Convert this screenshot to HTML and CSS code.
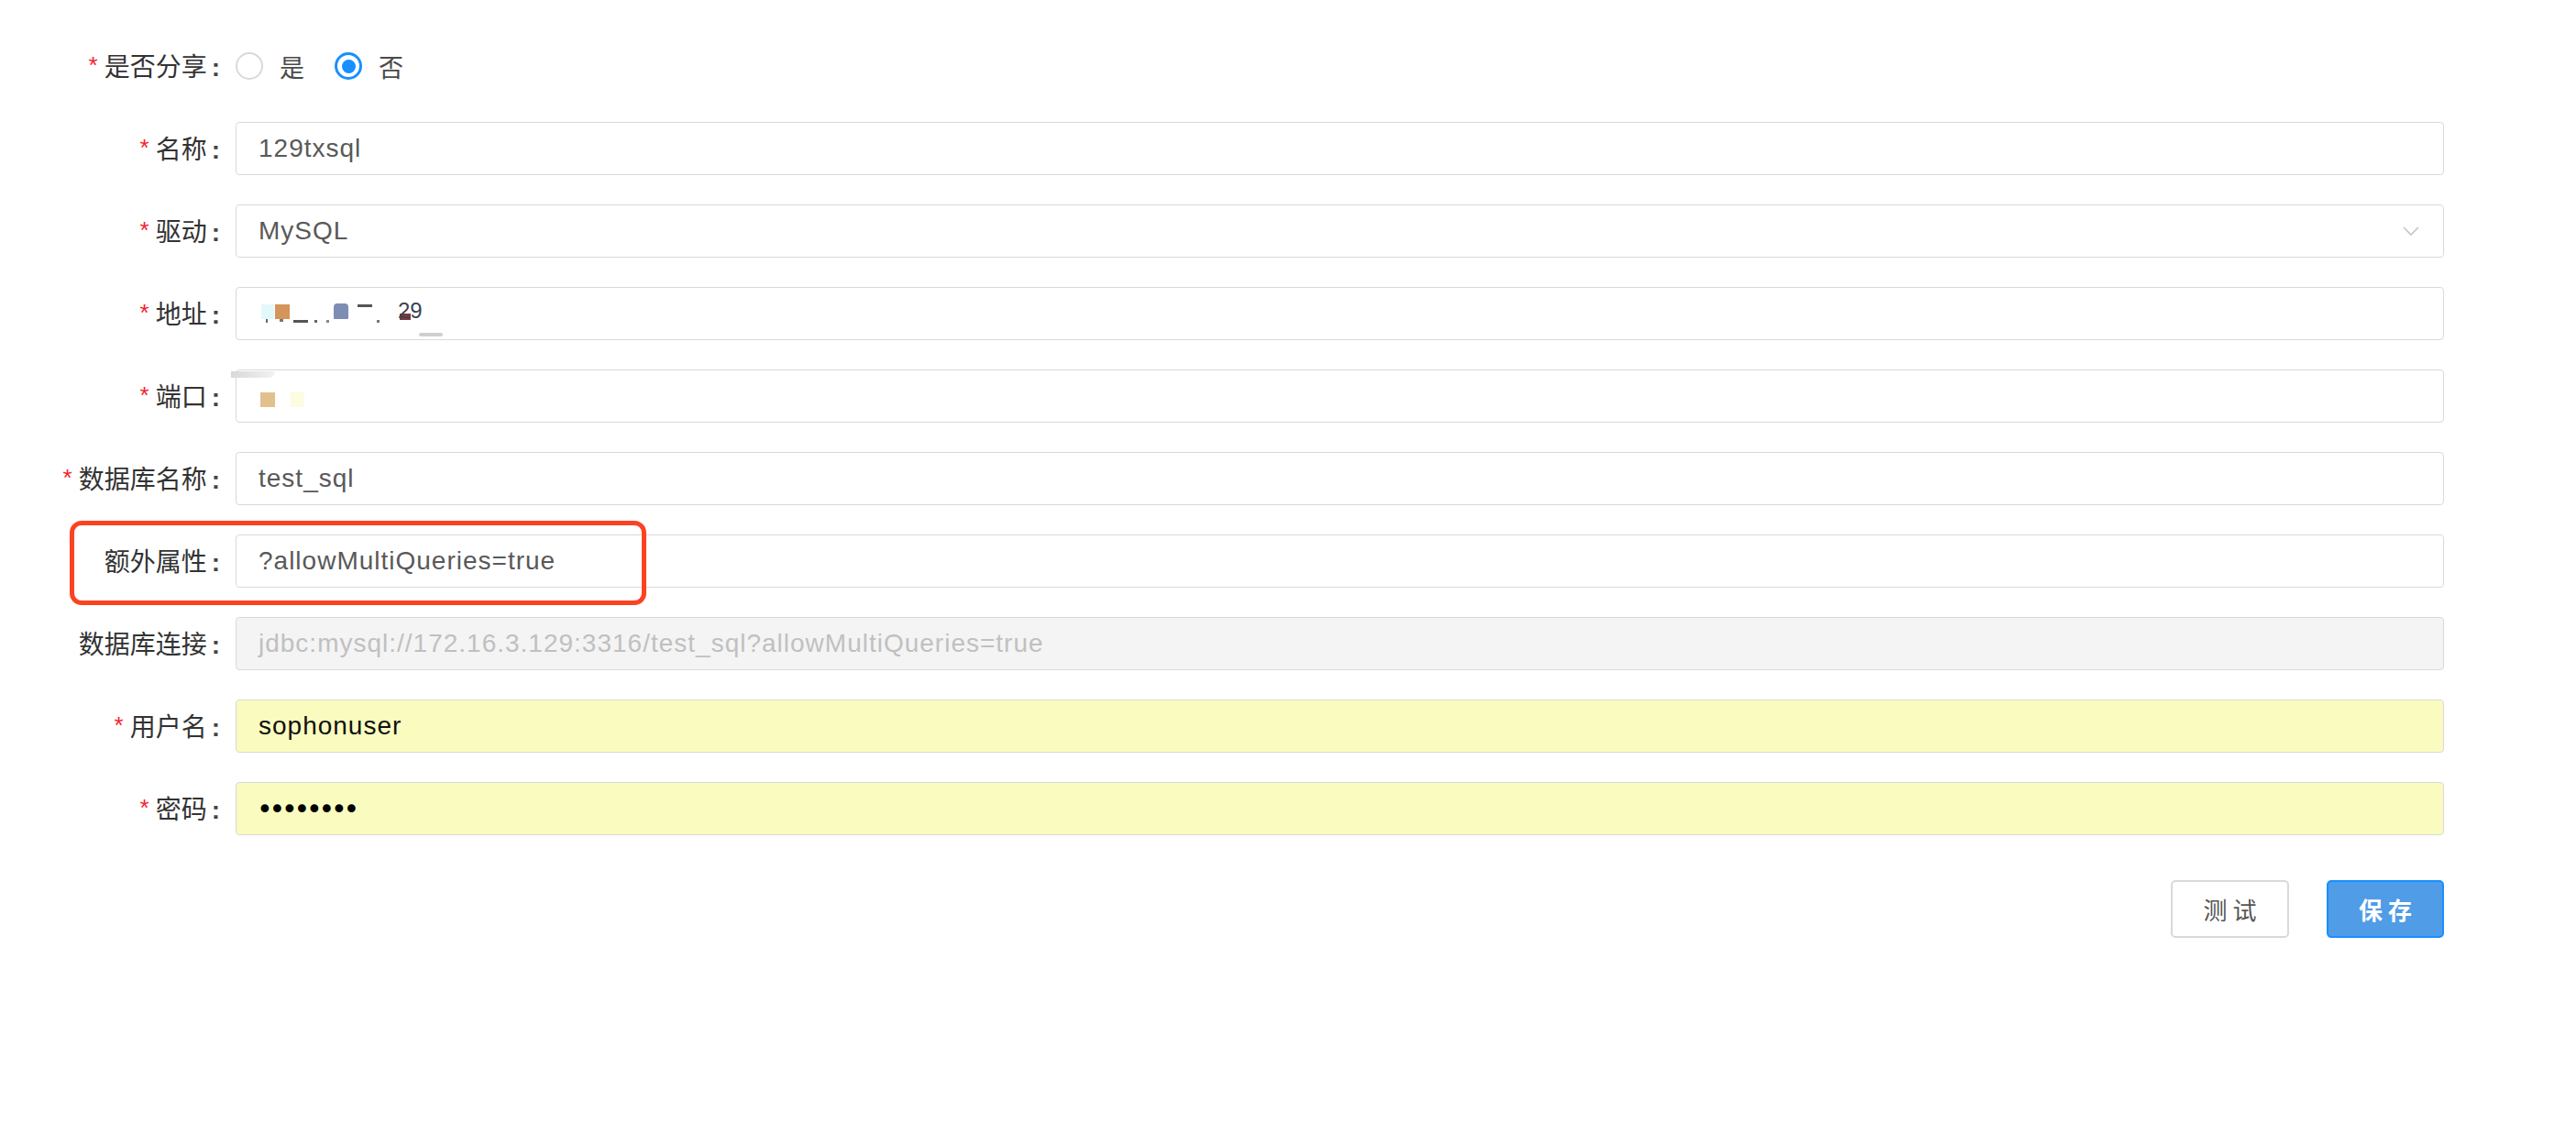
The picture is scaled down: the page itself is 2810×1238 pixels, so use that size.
FILE: index.html
```html
<!DOCTYPE html>
<html lang="zh-CN">
<head>
<meta charset="utf-8">
<title>数据源</title>
<link rel="stylesheet" href="styles.css">
</head>
<body>
<form class="form">
  <div class="row">
    <div class="label"><span class="req">*</span>是否分享<span class="colon">:</span></div>
    <div class="radios">
      <span class="radio-item"><span class="radio"></span><span class="radio-text">是</span></span>
      <span class="radio-item"><span class="radio checked"><span class="dot"></span></span><span class="radio-text">否</span></span>
    </div>
  </div>
  <div class="row">
    <div class="label"><span class="req">*</span>名称<span class="colon">:</span></div>
    <div class="field">129txsql</div>
  </div>
  <div class="row">
    <div class="label"><span class="req">*</span>驱动<span class="colon">:</span></div>
    <div class="field select">MySQL
      <svg class="chev" width="18" height="10" viewBox="0 0 18 10"><path d="M1 1 L9 9 L17 1" fill="none" stroke="#c4c4c4" stroke-width="1.6"/></svg>
    </div>
  </div>
  <div class="row">
    <div class="label"><span class="req">*</span>地址<span class="colon">:</span></div>
    <div class="field masked">
      <span class="m m-cyan"></span>
      <span class="m m-orange"></span>
      <span class="m m-tick1"></span>
      <span class="m m-tick2"></span>
      <span class="m m-dash1"></span>
      <span class="m m-dot1"></span>
      <span class="m m-dot2"></span>
      <span class="m m-blue"></span>
      <span class="m m-dash2"></span>
      <span class="m m-dot3"></span>
      <span class="m m-brown"></span>
      <span class="m-text">29</span>
      <span class="m m-smear"></span>
    </div>
  </div>
  <div class="row">
    <div class="label"><span class="req">*</span>端口<span class="colon">:</span></div>
    <div class="field masked">
      <span class="m m-smear2"></span>
      <span class="m m-tan"></span>
      <span class="m m-pale"></span>
    </div>
  </div>
  <div class="row">
    <div class="label"><span class="req">*</span>数据库名称<span class="colon">:</span></div>
    <div class="field">test_sql</div>
  </div>
  <div class="row highlight-row">
    <div class="label">额外属性<span class="colon">:</span></div>
    <div class="field">?allowMultiQueries=true</div>
    <div class="annot"></div>
  </div>
  <div class="row">
    <div class="label">数据库连接<span class="colon">:</span></div>
    <div class="field disabled">jdbc:mysql://172.16.3.129:3316/test_sql?allowMultiQueries=true</div>
  </div>
  <div class="row">
    <div class="label"><span class="req">*</span>用户名<span class="colon">:</span></div>
    <div class="field autofill">sophonuser</div>
  </div>
  <div class="row">
    <div class="label"><span class="req">*</span>密码<span class="colon">:</span></div>
    <div class="field autofill"><span class="pwd">••••••••</span></div>
  </div>
  <div class="actions">
    <button type="button" class="btn">测 试</button>
    <button type="button" class="btn primary">保 存</button>
  </div>
</form>
</body>
</html>
```
FILE: styles.css
```css
html, body {
  margin: 0;
  padding: 0;
  background: #ffffff;
}
body {
  font-family: "Noto Sans CJK SC", "Liberation Sans", sans-serif;
  color: #333333;
}
.form {
  width: 2666px;
  padding-top: 43px;
  display: flex;
  flex-direction: column;
  gap: 32px;
}
.row {
  position: relative;
  display: flex;
  align-items: center;
  height: 58px;
}
.label {
  flex: 0 0 257px;
  box-sizing: border-box;
  padding-right: 17px;
  text-align: right;
  font-size: 28px;
  line-height: 58px;
  color: #333333;
  white-space: nowrap;
}
.req {
  color: #f5222d;
  font-family: "Liberation Sans", sans-serif;
  font-size: 26px;
  margin-right: 7px;
  position: relative;
  top: -3px;
}
.colon {
  font-family: "Liberation Sans", sans-serif;
  font-size: 28px;
  margin-left: 5px;
  font-weight: bold;
  color: #444;
}
.radios {
  display: flex;
  align-items: center;
}
.radio-item {
  display: flex;
  align-items: center;
  margin-right: 33px;
}
.radio {
  width: 30px;
  height: 30px;
  box-sizing: border-box;
  border: 2px solid #d9d9d9;
  border-radius: 50%;
  display: flex;
  align-items: center;
  justify-content: center;
  background: #fff;
}
.radio.checked {
  border: 3px solid #1890ff;
}
.dot {
  width: 15px;
  height: 15px;
  border-radius: 50%;
  background: #1890ff;
}
.radio-text {
  margin-left: 18px;
  font-size: 27px;
  color: #4a4a4a;
}
.field {
  flex: 1;
  height: 58px;
  box-sizing: border-box;
  border: 1.5px solid #d9d9d9;
  border-radius: 4px;
  padding: 0 24px;
  display: flex;
  align-items: center;
  font-family: "Liberation Sans", sans-serif;
  font-size: 28px;
  letter-spacing: 1px;
  color: #595959;
  background: #fff;
  position: relative;
}
.select .chev {
  margin-left: auto;
  margin-right: 2px;
}
.disabled {
  background: #f4f4f4;
  color: #c0c0c0;
}
.autofill {
  background: #fafcbf;
  color: #111;
}
.pwd {
  font-family: "DejaVu Sans", sans-serif;
  font-size: 30px;
  letter-spacing: -4.2px;
  color: #000;
  margin-left: -2px;
}
.annot {
  position: absolute;
  left: 76px;
  top: -15px;
  width: 629px;
  height: 92px;
  box-sizing: border-box;
  border: 5px solid #fb4322;
  border-radius: 13px;
  pointer-events: none;
}
.actions {
  display: flex;
  justify-content: flex-end;
  gap: 41px;
  margin-top: 17px;
}
.btn {
  width: 129px;
  height: 63px;
  box-sizing: border-box;
  border: 2px solid #d9d9d9;
  border-radius: 5px;
  background: #fff;
  font-family: "Noto Sans CJK SC", sans-serif;
  font-size: 26px;
  color: #555;
  padding: 0;
  cursor: pointer;
}
.btn.primary {
  width: 128px;
  background: #509ce6;
  border-color: #1890ff;
  color: #fff;
  font-weight: bold;
}

/* redaction marks in masked fields */
.m {
  position: absolute;
  display: block;
}
.m-cyan { left: 27px; top: 18px; width: 14px; height: 16px; background: #e2f8fb; }
.m-orange { left: 42px; top: 18px; width: 16px; height: 16px; background: #d4945a; }
.m-tick1 { left: 32px; top: 34px; width: 2px; height: 4px; background: #666; }
.m-tick2 { left: 47px; top: 34px; width: 4px; height: 3px; background: #777; }
.m-dash1 { left: 62px; top: 35px; width: 16px; height: 3px; background: #555; }
.m-dot1 { left: 85px; top: 35px; width: 3px; height: 3px; background: #666; }
.m-dot2 { left: 98px; top: 35px; width: 3px; height: 3px; background: #888; }
.m-blue { left: 106px; top: 17px; width: 16px; height: 17px; background: #7d8db3; border-radius: 4px 4px 1px 1px; }
.m-dash2 { left: 132px; top: 18px; width: 16px; height: 3px; background: #555; }
.m-dot3 { left: 153px; top: 35px; width: 3px; height: 3px; background: #777; }
.m-brown { left: 178px; top: 28px; width: 12px; height: 7px; background: #7a3a3a; }
.m-text {
  position: absolute;
  left: 176px;
  top: 11px;
  font-size: 24px;
  line-height: 28px;
  color: #3c4254;
  letter-spacing: 0;
}
.m-smear { left: 199px; top: 49px; width: 26px; height: 4px; background: #cfcfcf; border-radius: 2px; }
.m-smear2 { left: -6px; top: 1px; width: 48px; height: 7px; background: linear-gradient(90deg, #d8d8d8, #f2f2f2); border-radius: 0 0 10px 0; }
.m-tan { left: 26px; top: 24px; width: 16px; height: 16px; background: #e2c08d; }
.m-pale { left: 59px; top: 24px; width: 15px; height: 16px; background: #fdfbe0; }
```
